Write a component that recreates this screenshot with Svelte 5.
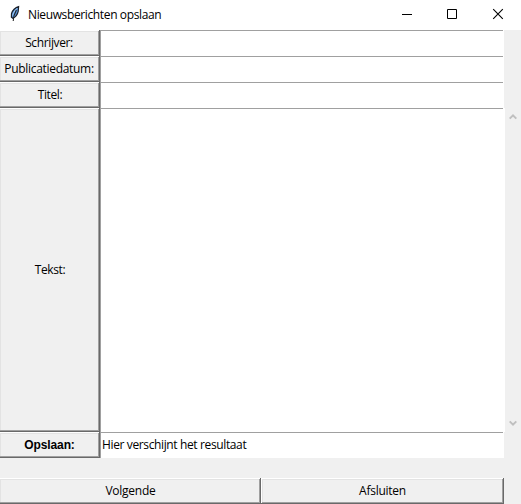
<script>
  const fields = [
    { id: 'schrijver', label: 'Schrijver:' },
    { id: 'datum', label: 'Publicatiedatum:' },
    { id: 'titel', label: 'Titel:' }
  ];
</script>

<div class="window">
  <header>
    <svg class="feather" width="12" height="18" viewBox="0 0 12 18">
      <path d="M9.6 1.6C6.4 2.4 3.2 5.6 2.5 8.6L2.4 12.2L3.9 13.3C6.8 12 8.6 9.2 9.2 6.4Z" fill="#5590d6" stroke="#1b2029" stroke-width="1.2" />
      <path d="M8.2 3.2C5.6 5.5 4.3 8.2 3.6 10.6" fill="none" stroke="#a9d2f6" stroke-width="1" />
      <path d="M7.4 5C5.4 8.5 4.3 12 4.2 16" fill="none" stroke="#242424" stroke-width="1.1" />
    </svg>
    <h1>Nieuwsberichten opslaan</h1>
    <svg class="controls" width="130" height="30" viewBox="0 0 130 30" fill="none" stroke="#000">
      <path d="M11 14.5H21" />
      <path d="M56.5 9.5H65.5V18.5H56.5Z" />
      <path d="M102.2 9.2L111.8 18.8M111.8 9.2L102.2 18.8" stroke-width="1.1" />
    </svg>
  </header>

  <main>
    {#each fields as field (field.id)}
      <div class="row">
        <button class={field.id}><span>{field.label}</span></button>
        <input aria-label={field.label} />
        <div class="gutter"></div>
      </div>
    {/each}
    <div class="row tall">
      <button class="tekst"><span>Tekst:</span></button>
      <textarea aria-label="Tekst"></textarea>
      <div class="scroll">
        <svg width="8" height="7" viewBox="0 0 8 7"><path d="M0.7 5.6L4 2.3L7.3 5.6" /></svg>
        <svg width="8" height="7" viewBox="0 0 8 7"><path d="M0.7 1.4L4 4.7L7.3 1.4" /></svg>
      </div>
    </div>
    <div class="row">
      <button class="bold"><span>Opslaan:</span></button>
      <div class="result"><span>Hier verschijnt het resultaat</span></div>
      <div class="gutter"></div>
    </div>
  </main>

  <footer>
    <button class="next"><span>Volgende</span></button>
    <button class="close"><span>Afsluiten</span></button>
  </footer>
</div>

<style>
  :global(body) { margin: 0; overflow: hidden; }
  .window {
    width: 521px;
    height: 504px;
    background: #f0f0f0;
    color: #000;
    font-family: "Open Sans", "Noto Sans", sans-serif;
    font-size: 12px;
    letter-spacing: -0.37px;
    display: flex;
    flex-direction: column;
  }
  * { box-sizing: border-box; }
  header {
    height: 30px;
    background: #fff;
    display: flex;
    flex: none;
  }
  .feather { margin: 5px 0 0 9px; }
  h1 {
    margin: 0 0 0 7px;
    font-size: 12px;
    font-weight: 400;
    line-height: 29px;
    white-space: nowrap;
  }
  .controls { margin-left: auto; }
  .row { display: flex; height: 26px; }
  .tall { height: 324px; }
  button {
    width: 100px;
    flex: none;
    padding: 0;
    border: 0;
    border-radius: 0;
    background: #f0f0f0;
    color: #000;
    font: inherit;
    letter-spacing: inherit;
    line-height: 16px;
    text-align: center;
    white-space: nowrap;
    box-shadow: inset -1px -1px #696969, inset 0 1px #fff, inset -2px -2px #a0a0a0, inset 1px 2px #e3e3e3;
  }
  button.datum { padding-right: 2px; letter-spacing: -0.3px; }
  button.schrijver { padding-right: 2px; }
  button.bold {
    padding-right: 1px;
    font-family: "Liberation Sans", Arial, sans-serif;
    font-weight: 700;
    letter-spacing: -0.1px;
  }
  input, textarea, .result {
    width: 404px;
    flex: none;
    margin: 0;
    padding: 0 2px;
    border: 0;
    border-radius: 0;
    outline: 0;
    resize: none;
    background: #fff;
    font: inherit;
    box-shadow: inset -1px 0 #fff, inset 1px 1px #a0a0a0;
  }
  textarea { width: 405px; box-shadow: inset -2px 0 #fff, inset 1px 1px #a0a0a0; }
  .result { line-height: 26px; white-space: nowrap; }
  .gutter { flex: 1; }
  .scroll {
    flex: 1;
    display: flex;
    flex-direction: column;
    justify-content: space-between;
    align-items: flex-start;
    padding: 5px 0 5px 4px;
  }
  .scroll path { fill: none; stroke: #bfbfbf; stroke-width: 2; }
  footer { display: flex; margin-top: 20px; height: 26px; }
  button.next { width: 261px; letter-spacing: -0.25px; }
  button.close { width: 243px; letter-spacing: -0.25px; box-shadow: inset -1px -1px #696969, inset 1px 1px #fff, inset -2px -2px #a0a0a0, inset 2px 2px #e3e3e3; }
</style>
